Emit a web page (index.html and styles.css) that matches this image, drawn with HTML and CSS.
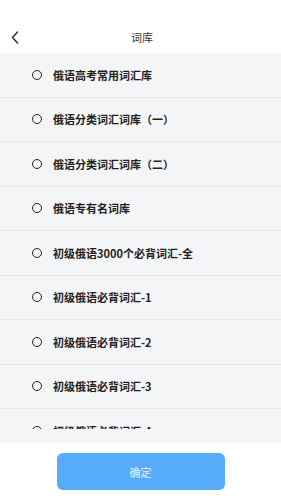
FILE: index.html
```html
<!DOCTYPE html>
<html lang="zh-CN">
<head>
    <meta charset="UTF-8">
    <meta name="viewport" content="width=device-width, initial-scale=1.0">
    <title>词库</title>
    <link rel="stylesheet" href="styles.css">
</head>
<body>
    <div class="page">
        <div class="nav-bar">
            <span class="back">
                <svg width="8" height="13" viewBox="0 0 8 13"><path d="M6.5 1 L1.5 6.5 L6.5 12" fill="none" stroke="#333" stroke-width="1.5" stroke-linecap="round" stroke-linejoin="round"/></svg>
            </span>
            <span class="title">词库</span>
        </div>

        <div class="list-wrap">
            <ul class="book-list">
                <li class="book-item"><span class="radio"></span>俄语高考常用词汇库</li>
                <li class="book-item"><span class="radio"></span>俄语分类词汇词库（一）</li>
                <li class="book-item"><span class="radio"></span>俄语分类词汇词库（二）</li>
                <li class="book-item"><span class="radio"></span>俄语专有名词库</li>
                <li class="book-item"><span class="radio"></span>初级俄语3000个必背词汇-全</li>
                <li class="book-item"><span class="radio"></span>初级俄语必背词汇-1</li>
                <li class="book-item"><span class="radio"></span>初级俄语必背词汇-2</li>
                <li class="book-item"><span class="radio"></span>初级俄语必背词汇-3</li>
                <li class="book-item"><span class="radio"></span>初级俄语必背词汇-4</li>
            </ul>
        </div>

        <div class="footer">
            <button class="confirm-btn">确定</button>
        </div>
    </div>
</body>
</html>
```

FILE: styles.css
```css
:root {
    --list-bg: #f4f5f7;
    --line: #e6e7ea;
    --text: #1f1f1f;
    --blue: #56acf8;
}

body {
    margin: 0;
    background: #fff;
    font-family: "Noto Sans CJK SC", "Noto Sans", sans-serif;
    color: var(--text);
}

.page {
    width: 281px;
    height: 500px;
    display: flex;
    flex-direction: column;
}

.nav-bar {
    height: 33px;
    padding-top: 20px;
    display: flex;
    align-items: center;
    justify-content: center;
    position: relative;
}

.back {
    position: absolute;
    left: 11px;
    top: 31px;
    display: flex;
}

.title {
    font-size: 11px;
    color: #333;
    margin-left: 3px;
}

.list-wrap {
    background: var(--list-bg);
    padding-bottom: 14px;
}

.book-list {
    list-style: none;
    margin: 0;
    padding: 0;
    height: 376px;
    overflow: hidden;
}

.book-item {
    height: 43.5px;
    border-bottom: 1px solid var(--line);
    display: flex;
    align-items: center;
    padding-left: 32px;
    gap: 11px;
    font-size: 11px;
    font-weight: bold;
}

.radio {
    width: 8px;
    height: 8px;
    border: 1.5px solid #222;
    border-radius: 50%;
    flex-shrink: 0;
}

.footer {
    display: flex;
    justify-content: center;
    padding-top: 10px;
}

.confirm-btn {
    width: 168px;
    height: 37px;
    border: none;
    border-radius: 6px;
    background: var(--blue);
    color: #e6f3ff;
    font-family: inherit;
    font-size: 11px;
}
```
